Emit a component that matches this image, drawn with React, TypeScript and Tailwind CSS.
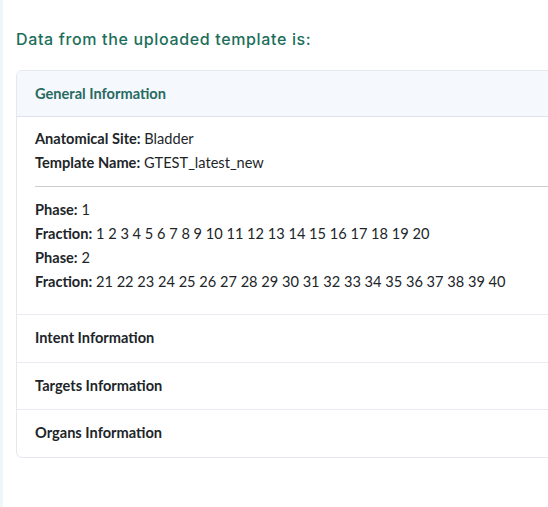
const SECTIONS = ['Intent Information', 'Targets Information', 'Organs Information'];

const range = (from: number, to: number) =>
  Array.from({ length: to - from + 1 }, (_, i) => from + i).join(' ');

function Field({ label, value }: { label: string; value: string }) {
  return (
    <p className="leading-6">
      <span className="font-bold">{label}:</span> {value}
    </p>
  );
}

export default function App() {
  return (
    <div className="flex min-h-[507px] w-[548px] overflow-hidden bg-white">
      <div className="w-[3px] shrink-0 bg-[#edf6f9]" />
      <div className="min-w-0 flex-1 pl-[13px] pt-[27px]">
        <h2
          className="text-[16px] font-medium tracking-[0.65px] text-[#1c6e5b]"
          style={{ fontFamily: 'Inter, sans-serif' }}
        >
          Data from the uploaded template is:
        </h2>

        <div
          className="mt-[19px] w-[560px] rounded-md border border-[#e6e8f0] text-[14.6px] text-[#212529]"
          style={{ fontFamily: 'Lato, sans-serif' }}
        >
          <div className="flex h-[46px] items-center rounded-t-md border-b border-[#e0e2ea] bg-[#f5f8fd] px-[18px] font-bold text-[#276a62]">
            General Information
          </div>

          <div className="px-[18px] pb-[20px] pt-[10px]">
            <Field label="Anatomical Site" value="Bladder" />
            <Field label="Template Name" value="GTEST_latest_new" />
            <hr className="my-[11px] border-[#cccccc]" />
            <Field label="Phase" value="1" />
            <Field label="Fraction" value={range(1, 20)} />
            <Field label="Phase" value="2" />
            <Field label="Fraction" value={range(21, 40)} />
          </div>

          {SECTIONS.map((s) => (
            <div
              key={s}
              className="flex h-[47.5px] items-center border-t border-[#e9eaf2] px-[18px] font-bold"
            >
              {s}
            </div>
          ))}
        </div>
      </div>
    </div>
  );
}
